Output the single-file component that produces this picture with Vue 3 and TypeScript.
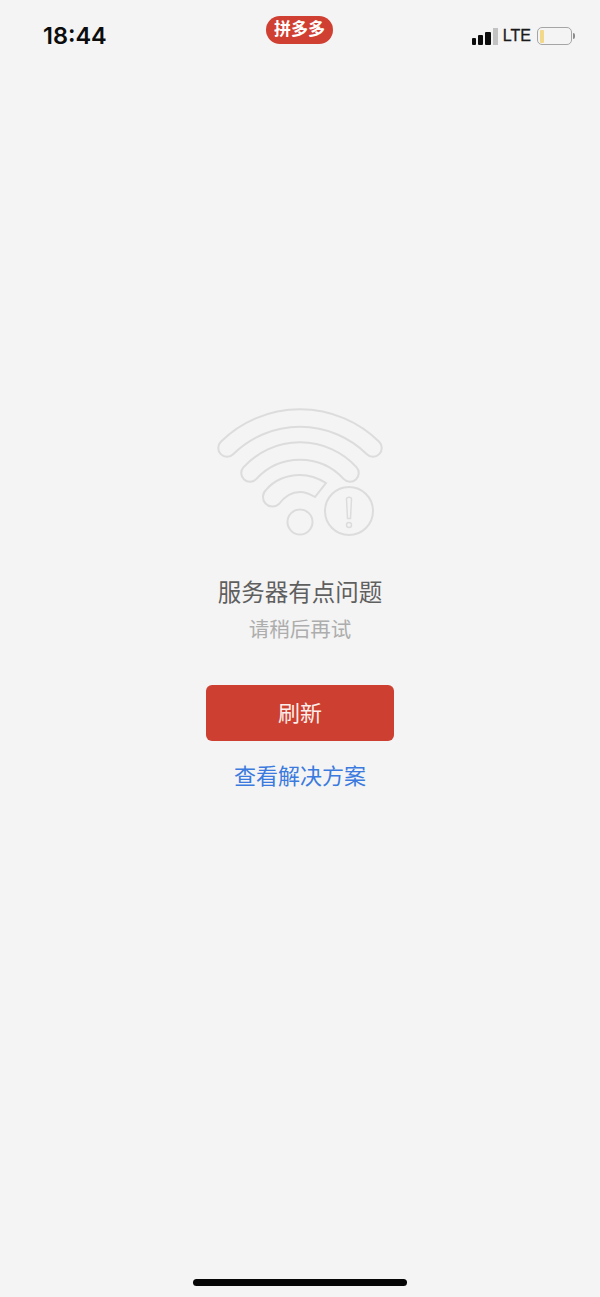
<script setup lang="ts">
// 服务器错误页：状态栏 + 空状态 + 底部横条
const signalBars = [
  { w: 4.5, h: 7, on: true },
  { w: 4.5, h: 10, on: true },
  { w: 6, h: 13, on: true },
  { w: 5, h: 17, on: false },
];
// wifi 的两道外弧：粗描边 + 背景色细描边 = 圆头空心带
const arcs = [
  'M11 40A104 104 0 0 1 157 40',
  'M34 65A68 68 0 0 1 134 65',
];
</script>

<template>
  <div class="page">
    <header class="status">
      <span class="status__time">18:44</span>
      <span class="status__app">拼多多</span>
      <div class="status__right">
        <div class="signal">
          <i
            v-for="(b, i) in signalBars"
            :key="i"
            :class="{ off: !b.on }"
            :style="{ width: b.w + 'px', height: b.h + 'px' }"
          />
        </div>
        <span class="status__net">LTE</span>
        <div class="battery">
          <div class="battery__level" />
        </div>
        <div class="battery__cap" />
      </div>
    </header>

    <main class="empty">
      <svg class="empty__icon" width="168" height="130" viewBox="0 0 168 130" fill="none" stroke="#dcdcdc" stroke-width="2">
        <g v-for="d in arcs" :key="d" stroke-linecap="round">
          <path :d="d" stroke-width="19.5" />
          <path :d="d" stroke="#f4f4f4" stroke-width="15.5" />
        </g>
        <path d="M50 82C58 72 71 67 84 67c9 0 18 3 26 8L99 89c-5-3-10-5-15-5-8 0-15 4-21 12a8.500 8.500 0 0 1-13-14Z" />
        <circle cx="84" cy="114" r="12.500" />
        <circle cx="133" cy="103" r="24" />
        <path d="M130.500 91c0-2.500 5-2.500 5 0l-1 19.500h-3Z" stroke-width="1.500" />
        <circle cx="133" cy="117" r="2.500" stroke-width="1.500" />
      </svg>
      <h1 class="empty__title">服务器有点问题</h1>
      <p class="empty__sub">请稍后再试</p>
      <button class="empty__btn" type="button">刷新</button>
      <a class="empty__link">查看解决方案</a>
    </main>

    <div class="home-bar" />
  </div>
</template>

<style>
html, body { margin: 0; background: #f4f4f4; }
</style>

<style scoped>
.page {
  display: flex; flex-direction: column;
  height: 1297px; overflow: hidden; background: #f4f4f4;
  font-family: "Liberation Sans", "Noto Sans CJK SC", sans-serif;
}
.status {
  display: grid; grid-template-columns: 1fr auto 1fr; align-items: start;
  height: 60px; padding: 0 25px; box-sizing: border-box; flex-shrink: 0;
}
.status__time {
  margin: 22px 0 0 18px;
  font-family: Inter, "Liberation Sans", sans-serif;
  font-size: 23.500px; line-height: 28px; font-weight: 600; color: #0c0c0c;
}
.status__app {
  margin: 16px 1px 0 0; padding: 0 8px; height: 28px; border-radius: 14px;
  background: #cf3f32; color: #fff; font-size: 17px; font-weight: 700; line-height: 28px;
}
.status__right { display: flex; align-items: flex-end; justify-content: flex-end; margin-top: 27px; height: 18px; }
.signal { display: flex; align-items: flex-end; gap: 2px; margin-right: 5px; }
.signal i { background: #0c0c0c; border-radius: 1px; }
.signal i.off { background: #c2c2c2; border-radius: 0; }
.status__net { font-size: 16px; line-height: 18px; color: #1a1a1a; margin-right: 6px; -webkit-text-stroke: 0.3px #1a1a1a; }
.battery {
  width: 35px; height: 18px; border: 1.500px solid #a5a5a5; border-radius: 5px;
  padding: 1.500px; box-sizing: border-box; display: flex;
}
.battery__level { width: 4px; background: #f2d98a; border-radius: 1px; }
.battery__cap { width: 2px; height: 6px; background: #8c8c8c; border-radius: 0 3px 3px 0; margin: 0 0 6px 1px; }

.empty {
  display: flex; flex-direction: column; align-items: center;
  padding-top: 348px; flex: 1;
}
.empty__icon { display: block; }
.empty__title { margin: 40px 0 0; font-size: 23.500px; line-height: 30px; font-weight: 400; color: #5f5f5f; }
.empty__sub { margin: 7px 0 0; font-size: 20.500px; line-height: 30px; color: #adadad; }
.empty__btn {
  margin-top: 40px; width: 188px; height: 56px; padding: 0 0 4px; border: 0; border-radius: 6px;
  background: #cd3f30; color: #fbeeea; font: inherit; font-size: 22px;
}
.empty__link { margin-top: 20px; font-size: 22px; line-height: 32px; color: #3b7ade; }
.home-bar {
  flex-shrink: 0; align-self: center; margin-bottom: 11px;
  width: 214px; height: 7px; border-radius: 4px; background: #050505;
}
</style>
